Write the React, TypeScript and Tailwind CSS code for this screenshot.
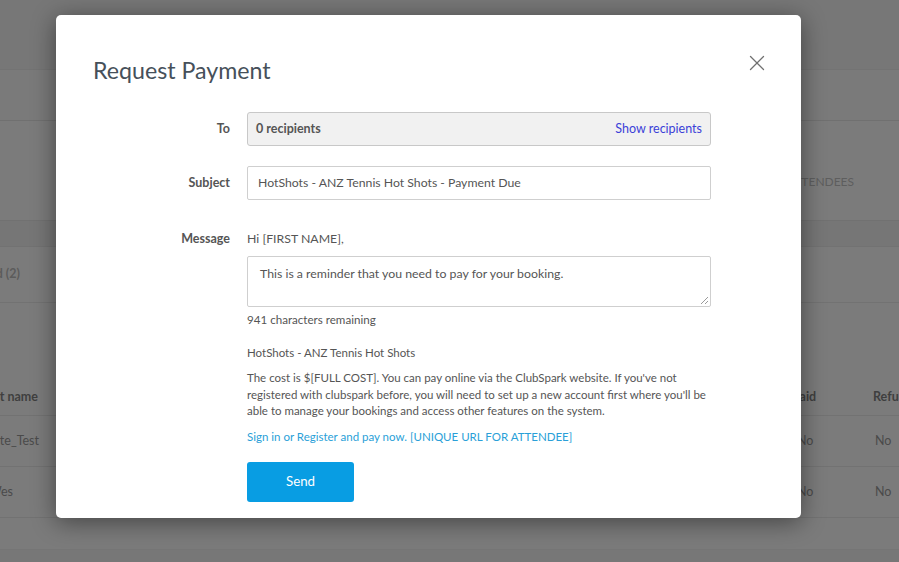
import { X } from "lucide-react";

const rows = [
  { name: "Kate_Test", end: "w-[39px]", paid: "No", refunded: "No" },
  { name: "Wes", end: "w-[13px]", paid: "No", refunded: "No" },
];

function Backdrop() {
  return (
    <div className="flex flex-col text-[#545454] whitespace-nowrap">
      <div className="h-[70px] bg-[#777777] border-b border-[#737373]" />
      <div className="h-[51px] bg-[#7a7a7a] border-b border-[#707070]" />
      <div className="h-[100px] bg-[#7b7b7b] border-b border-[#717171] flex items-center">
        <span className="ml-[787px] mt-[22px] text-[12px] text-[#5e5e5e]">ATTENDEES</span>
      </div>
      <div className="h-[26px] bg-[#767676] border-b border-[#727272]" />
      <div className="h-[56px] bg-[#7b7b7b] border-b border-[#727272] flex items-center">
        <div className="w-[20px] shrink-0 flex justify-end">
          <span className="text-[12.5px] font-bold text-[#5c5c5c]">Waitlisted (2)</span>
        </div>
      </div>
      <div className="h-[76px] bg-[#7b7b7b]" />
      <div className="h-[37px] bg-[#7b7b7b] border-b border-[#727272] flex items-center text-[12.5px] font-bold text-[#3f3f3f]">
        <div className="w-[38px] shrink-0 flex justify-end">
          <span>Last name</span>
        </div>
        <span className="ml-[754px] w-[81px] shrink-0">Paid</span>
        <span>Refunded</span>
      </div>
      {rows.map((r) => (
        <div
          key={r.name}
          className="h-[51px] bg-[#7b7b7b] border-b border-[#727272] flex items-center text-[12.5px] text-[#4a4a4a]"
        >
          <div className={`${r.end} shrink-0 flex justify-end`}>
            <span>{r.name}</span>
          </div>
          <span className={r.name === "Wes" ? "ml-[784px] w-[78px] shrink-0" : "ml-[758px] w-[78px] shrink-0"}>{r.paid}</span>
          <span>{r.refunded}</span>
        </div>
      ))}
      <div className="h-[32px] bg-[#7b7b7b] border-b border-[#757575]" />
      <div className="h-[40px] bg-[#777777]" />
    </div>
  );
}

export default function App() {
  return (
    <div
      className="relative w-[899px] h-[562px] overflow-hidden bg-[#7b7b7b]"
      style={{ fontFamily: "Lato, 'Open Sans', sans-serif" }}
    >
      <Backdrop />

      <div className="absolute left-[56px] top-[15px] w-[745px] bg-white rounded-[5px] shadow-[0_4px_24px_rgba(0,0,0,0.45)] pl-[37px] pr-[36px] pt-[41px] pb-[16px]">
        <button className="absolute right-[31px] top-[35px] text-[#707070]">
          <X className="w-[26px] h-[26px]" strokeWidth={1.2} />
        </button>

        <h2 className="text-[23.2px] leading-[28px] text-[#46505a]">Request Payment</h2>

        <div className="grid grid-cols-[137px_464px] gap-x-[17px] mt-[28px] text-[#555555]">
          <label className="text-[12.5px] font-bold self-center text-right pt-[1px]">To</label>
          <div className="h-[34px] bg-[#f1f1f1] border border-[#c8c8c8] rounded-[3px] flex items-center justify-between pl-[8px] pr-[8px] text-[12.5px] pt-[1px]">
            <span className="font-bold">0 recipients</span>
            <span className="text-[#3b3fd8]">Show recipients</span>
          </div>

          <label className="text-[12.5px] font-bold self-center text-right mt-[20px]">Subject</label>
          <div className="mt-[20px] h-[34px] border border-[#cfcfcf] rounded-[2px] flex items-center px-[10px] text-[12.25px]">
            HotShots - ANZ Tennis Hot Shots - Payment Due
          </div>

          <label className="text-[12.5px] font-bold text-right mt-[29px] leading-[20px]">Message</label>
          <div className="mt-[29px] flex flex-col">
            <p className="text-[12.3px] leading-[20px]">Hi [FIRST NAME],</p>
            <div className="relative mt-[7px] h-[51px] border border-[#cfcfcf] rounded-[2px] px-[12px] pt-[7px] text-[12.3px] leading-[20px]">
              This is a reminder that you need to pay for your booking.
              <svg className="absolute right-[1px] bottom-[1px]" width="9" height="9" viewBox="0 0 9 9">
                <path d="M8 1 L1 8 M8 5 L5 8" stroke="#9a9a9a" strokeWidth="1" />
              </svg>
            </div>
            <p className="mt-[5px] text-[11.6px] leading-[16px]">941 characters remaining</p>
            <p className="mt-[17px] text-[11.5px] leading-[16px]">HotShots - ANZ Tennis Hot Shots</p>
            <p className="mt-[9px] text-[11.5px] leading-[16.5px]">
              The cost is $[FULL COST]. You can pay online via the ClubSpark website. If you've not
              registered with clubspark before, you will need to set up a new account first where you'll be
              able to manage your bookings and access other features on the system.
            </p>
            <a className="mt-[9px] text-[11.5px] leading-[16px] text-[#2a9fd8]">
              Sign in or Register and pay now. [UNIQUE URL FOR ATTENDEE]
            </a>
            <button className="mt-[17px] w-[107px] h-[40px] bg-[#089de3] rounded-[3px] text-white text-[13.3px]">
              Send
            </button>
          </div>
        </div>
      </div>
    </div>
  );
}
